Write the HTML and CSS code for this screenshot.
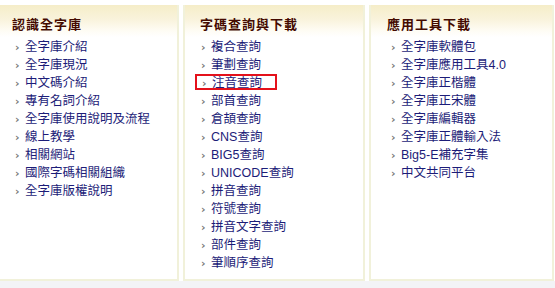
FILE: index.html
```html
<html>
<head>
  <title>全字庫</title>
  <link rel="stylesheet" href="styles.css">
</head>
<body>
  <div class="boxes">
    <div class="box box-about">
      <div class="box-title">認識全字庫</div>
      <ul class="links">
        <li><a href="#">全字庫介紹</a></li>
        <li><a href="#">全字庫現況</a></li>
        <li><a href="#">中文碼介紹</a></li>
        <li><a href="#">專有名詞介紹</a></li>
        <li><a href="#">全字庫使用說明及流程</a></li>
        <li><a href="#">線上教學</a></li>
        <li><a href="#">相關網站</a></li>
        <li><a href="#">國際字碼相關組織</a></li>
        <li><a href="#">全字庫版權說明</a></li>
      </ul>
    </div>
    <div class="box box-search">
      <div class="box-title">字碼查詢與下載</div>
      <ul class="links">
        <li><a href="#">複合查詢</a></li>
        <li><a href="#">筆劃查詢</a></li>
        <li class="marked"><a href="#">注音查詢</a></li>
        <li><a href="#">部首查詢</a></li>
        <li><a href="#">倉頡查詢</a></li>
        <li><a href="#">CNS查詢</a></li>
        <li><a href="#">BIG5查詢</a></li>
        <li><a href="#">UNICODE查詢</a></li>
        <li><a href="#">拼音查詢</a></li>
        <li><a href="#">符號查詢</a></li>
        <li><a href="#">拼音文字查詢</a></li>
        <li><a href="#">部件查詢</a></li>
        <li><a href="#">筆順序查詢</a></li>
      </ul>
    </div>
    <div class="box box-tools">
      <div class="box-title">應用工具下載</div>
      <ul class="links">
        <li><a href="#">全字庫軟體包</a></li>
        <li><a href="#">全字庫應用工具4.0</a></li>
        <li><a href="#">全字庫正楷體</a></li>
        <li><a href="#">全字庫正宋體</a></li>
        <li><a href="#">全字庫編輯器</a></li>
        <li><a href="#">全字庫正體輸入法</a></li>
        <li><a href="#">Big5-E補充字集</a></li>
        <li><a href="#">中文共同平台</a></li>
      </ul>
    </div>
  </div>
</body>
</html>
```

FILE: styles.css
```css
body {
  margin: 0;
  background-color: #f3f3f6;
  font-family: "Liberation Sans", "Noto Sans CJK TC", sans-serif;
}

.boxes {
  display: flex;
  align-items: flex-start;
  padding-top: 5px;
  background-color: #fff;
  height: 276px;
}

.box {
  box-sizing: border-box;
  height: 276px;
  background-color: #fff;
  border: 2px solid #f1f1da;
  border-top: none;
}

.box-about {
  width: 179px;
  border-left: none;
}

.box-search {
  width: 182px;
  margin-left: 4px;
}

.box-tools {
  width: 185px;
  margin-left: 4px;
}

.box-title {
  padding: 12px 0 6px 12px;
  height: 14px;
  line-height: 14px;
  font-family: "Noto Sans CJK TC", sans-serif;
  font-size: 13px;
  font-weight: bold;
  letter-spacing: 1px;
  color: #440a00;
  background: linear-gradient(to bottom, #f5edc8 0%, #f9f3dc 45%, #fefcf4 80%, #fff 100%);
}

.box-search .box-title {
  padding-left: 15px;
}

.box-tools .box-title {
  padding-left: 16px;
}

.links {
  list-style: none;
  margin: 0;
  padding: 0 0 0 15px;
}

.box-search .links {
  padding-left: 16px;
}

.box-tools .links {
  padding-left: 20px;
}

.links li {
  height: 18px;
  line-height: 18px;
  white-space: nowrap;
}

.links li:before {
  content: "\203A";
  display: inline-block;
  width: 10px;
  font-family: "DejaVu Sans", sans-serif;
  font-weight: bold;
  font-size: 11px;
  color: #777;
}

.links a {
  color: #1c1c78;
  text-decoration: none;
  font-size: 12.5px;
}

.links li.marked {
  box-sizing: border-box;
  width: 82px;
  margin: 1px 0 1px -6px;
  padding-left: 5px;
  height: 16px;
  line-height: 12px;
  border: 2px solid #e4111b;
}
```
